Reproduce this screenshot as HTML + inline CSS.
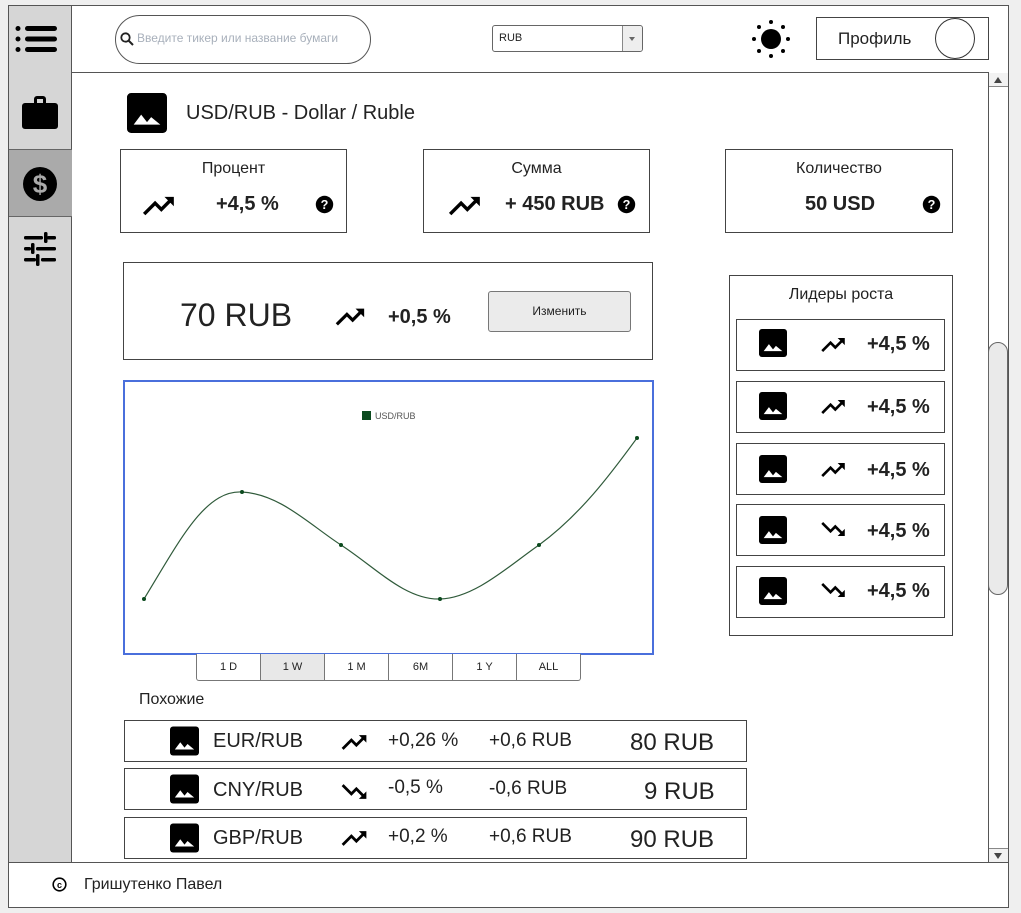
<!DOCTYPE html>
<html><head><meta charset="utf-8"><style>
*{box-sizing:border-box;margin:0;padding:0}
body{width:1021px;height:913px;background:#efefef;font-family:"Liberation Sans",Arial,sans-serif;color:#222;position:relative;overflow:hidden}
.a{position:absolute}
.box{position:absolute;border:1px solid #444;background:#fff}
.c{text-align:center}
svg{display:block}
.b{font-weight:bold}
</style></head><body>
<svg width="0" height="0" style="position:absolute"><defs>
<symbol id="up" viewBox="1 4 22 16"><path d="M2.5 17.5l7-7 4 4 6.3-6.3" fill="none" stroke="#000" stroke-width="2.2"/><path d="M15.5 6.5h6v6z" fill="#000"/></symbol>
<symbol id="dn" viewBox="1 4 22 16"><path d="M2.5 6.5l7 7 4-4 6.3 6.3" fill="none" stroke="#000" stroke-width="2.2"/><path d="M15.5 17.5h6v-6z" fill="#000"/></symbol>
<symbol id="img" viewBox="0 0 24 24"><rect x="0" y="0" width="24" height="24" rx="2.5" fill="#000"/><path d="M4 19l4.5-6 3.5 4.5 2.5-3 5.5 4.5z" fill="#fff"/></symbol>
<symbol id="q" viewBox="0 0 24 24"><circle cx="12" cy="12" r="11" fill="#000"/><text x="12" y="17.5" text-anchor="middle" font-family="Liberation Sans" font-weight="bold" font-size="16" fill="#fff">?</text></symbol>
</defs></svg>

<!-- frame -->
<div class="box" style="left:8px;top:5px;width:1001px;height:903px;border-color:#555"></div>
<div class="a" style="left:9px;top:6px;width:63px;height:856px;background:#d6d6d6;border-right:1px solid #555"></div>
<div class="a" style="left:9px;top:149px;width:63px;height:68px;background:#aaa;border-top:1px solid #666;border-bottom:1px solid #666"></div>
<svg class="a" style="left:14px;top:25px" width="44" height="28" viewBox="0 0 44 28"><circle cx="4" cy="3.5" r="2.5"/><circle cx="4" cy="14" r="2.5"/><circle cx="4" cy="24.5" r="2.5"/><rect x="11" y="1" width="32" height="5" rx="2.5"/><rect x="11" y="11.5" width="32" height="5" rx="2.5"/><rect x="11" y="22" width="32" height="5" rx="2.5"/></svg>
<svg class="a" style="left:22px;top:95px" width="36" height="34" viewBox="0 0 36 34"><path d="M12 8V4a3 3 0 0 1 3-3h6a3 3 0 0 1 3 3v4h-3V4h-6v4z"/><rect x="0" y="8" width="36" height="26" rx="3"/></svg>
<svg class="a" style="left:22px;top:166px" width="36" height="36" viewBox="0 0 36 36"><circle cx="18" cy="18" r="17"/><text x="18" y="27" text-anchor="middle" font-family="Liberation Sans" font-weight="bold" font-size="26" fill="#aaa">$</text></svg>
<svg class="a" style="left:23px;top:232px" width="34" height="34" viewBox="0 0 34 34" fill="#000"><rect x="1" y="4" width="19" height="3.5" rx="1.5"/><rect x="21" y="0" width="3.5" height="11" rx="1.5"/><rect x="24" y="4" width="9" height="3.5" rx="1.5"/><rect x="1" y="15" width="7" height="3.5" rx="1.5"/><rect x="8" y="11" width="3.5" height="11" rx="1.5"/><rect x="13" y="15" width="20" height="3.5" rx="1.5"/><rect x="1" y="26" width="12" height="3.5" rx="1.5"/><rect x="13" y="22" width="3.5" height="12" rx="1.5"/><rect x="18" y="26" width="15" height="3.5" rx="1.5"/></svg>

<!-- header -->
<div class="a" style="left:72px;top:72px;width:936px;height:1px;background:#555"></div>
<div class="a" style="left:115px;top:15px;width:256px;height:49px;border:1px solid #555;border-radius:25px;background:#fff"></div>
<svg class="a" style="left:120px;top:32px" width="14" height="14" viewBox="0 0 14 14"><circle cx="5.5" cy="5.5" r="4.2" fill="none" stroke="#222" stroke-width="1.8"/><path d="M8.5 8.5l4.5 4.5" stroke="#222" stroke-width="2"/></svg>
<div class="a" style="left:137px;top:31px;font-size:12px;color:#a8b0bb">Введите тикер или название бумаги</div>
<div class="a" style="left:492px;top:25px;width:151px;height:27px;border:1px solid #666;border-radius:3px;background:#fff"></div>
<div class="a" style="left:499px;top:32px;font-size:11px">RUB</div>
<div class="a" style="left:622px;top:26px;width:20px;height:25px;border-left:1px solid #888;background:#eee;border-radius:0 3px 3px 0"></div>
<div class="a" style="left:629px;top:37px;width:0;height:0;border-left:3px solid transparent;border-right:3px solid transparent;border-top:4px solid #666"></div>
<svg class="a" style="left:751px;top:19px" width="40" height="40" viewBox="0 0 40 40"><circle cx="20" cy="20" r="10"/><circle cx="20" cy="3" r="2"/><circle cx="20" cy="37" r="2"/><circle cx="3" cy="20" r="2"/><circle cx="37" cy="20" r="2"/><circle cx="8" cy="8" r="2"/><circle cx="32" cy="8" r="2"/><circle cx="8" cy="32" r="2"/><circle cx="32" cy="32" r="2"/></svg>
<div class="box" style="left:816px;top:17px;width:173px;height:43px"></div>
<div class="a" style="left:838px;top:29px;font-size:17px">Профиль</div>
<div class="a" style="left:935px;top:18px;width:40px;height:41px;border:1px solid #333;border-radius:50%;background:#fff"></div>

<!-- scrollbar -->
<div class="a" style="left:988px;top:72px;width:20px;height:790px;background:#fff;border-left:1px solid #555"></div>
<div class="a" style="left:989px;top:73px;width:19px;height:14px;border-bottom:1px solid #888;background:#f2f2f2"></div>
<div class="a" style="left:994px;top:77px;border-left:4px solid transparent;border-right:4px solid transparent;border-bottom:6px solid #444"></div>
<div class="a" style="left:989px;top:848px;width:19px;height:14px;border-top:1px solid #888;background:#f2f2f2"></div>
<div class="a" style="left:994px;top:853px;border-left:4px solid transparent;border-right:4px solid transparent;border-top:6px solid #444"></div>
<div class="a" style="left:988px;top:342px;width:20px;height:253px;border:1px solid #666;border-radius:10px;background:#eaeaea"></div>

<!-- footer -->
<div class="a" style="left:9px;top:862px;width:999px;height:45px;background:#fff;border-top:1px solid #555"></div>
<svg class="a" style="left:52px;top:877px" width="15" height="15" viewBox="0 0 15 15"><circle cx="7.5" cy="7.5" r="6.3" fill="none" stroke="#000" stroke-width="1.6"/><text x="7.5" y="11" text-anchor="middle" font-family="Liberation Sans" font-weight="bold" font-size="9">c</text></svg>
<div class="a" style="left:84px;top:876px;font-size:16px">Гришутенко Павел</div>

<!-- title -->
<svg class="a" style="left:127px;top:93px" width="40" height="40"><use href="#img"/></svg>
<div class="a" style="left:186px;top:102px;font-size:20px">USD/RUB - Dollar / Ruble</div>

<!-- stat cards -->
<div class="box" style="left:120px;top:149px;width:227px;height:84px"></div>
<div class="a c" style="left:120px;top:160px;width:227px;font-size:16px">Процент</div>
<svg class="a" style="left:141px;top:193px" width="36" height="25"><use href="#up"/></svg>
<div class="a b" style="left:216px;top:193px;font-size:20px">+4,5 %</div>
<svg class="a" style="left:315px;top:195px" width="19" height="19"><use href="#q"/></svg>

<div class="box" style="left:423px;top:149px;width:227px;height:84px"></div>
<div class="a c" style="left:423px;top:160px;width:227px;font-size:16px">Сумма</div>
<svg class="a" style="left:447px;top:193px" width="36" height="25"><use href="#up"/></svg>
<div class="a b" style="left:505px;top:193px;font-size:20px">+ 450 RUB</div>
<svg class="a" style="left:617px;top:195px" width="19" height="19"><use href="#q"/></svg>

<div class="box" style="left:725px;top:149px;width:228px;height:84px"></div>
<div class="a c" style="left:725px;top:160px;width:228px;font-size:16px">Количество</div>
<div class="a b" style="left:805px;top:193px;font-size:20px">50 USD</div>
<svg class="a" style="left:922px;top:195px" width="19" height="19"><use href="#q"/></svg>

<!-- price -->
<div class="box" style="left:123px;top:262px;width:530px;height:98px"></div>
<div class="a" style="left:180px;top:297px;font-size:32px">70 RUB</div>
<svg class="a" style="left:334px;top:305px" width="33" height="23"><use href="#up"/></svg>
<div class="a b" style="left:388px;top:306px;font-size:20px">+0,5 %</div>
<div class="a c" style="left:488px;top:291px;width:143px;height:41px;border:1px solid #777;border-radius:3px;background:#ebebeb;font-size:12px;line-height:39px">Изменить</div>

<!-- chart -->
<div class="a" style="left:123px;top:380px;width:531px;height:275px;border:2px solid #4a6fdc;background:#fff"></div>
<div class="a" style="left:362px;top:411px;width:9px;height:9px;background:#0b4a1e"></div>
<div class="a" style="left:375px;top:411px;font-size:9px;color:#555">USD/RUB</div>
<svg class="a" style="left:0;top:0" width="700" height="700" viewBox="0 0 700 700">
<path d="M144 599 C180 540 205 490 242 492 C280 494 310 525 341 545 C375 567 405 600 440 599 C475 598 510 565 539 545 C580 515 610 475 637 438" fill="none" stroke="#2f5a3a" stroke-width="1.2"/>
<g fill="#0b4a1e"><circle cx="144" cy="599" r="2"/><circle cx="242" cy="492" r="2"/><circle cx="341" cy="545" r="2"/><circle cx="440" cy="599" r="2"/><circle cx="539" cy="545" r="2"/><circle cx="637" cy="438" r="2"/></g>
</svg>
<div class="a" style="left:196px;top:654px;width:385px;height:27px;border:1px solid #777;border-top:none;border-radius:0 0 3px 3px;background:#fff;display:flex;font-size:11px">
<div class="c" style="width:64px;line-height:26px;border-right:1px solid #777">1 D</div>
<div class="c" style="width:64px;line-height:26px;border-right:1px solid #777;background:#e8e8e8">1 W</div>
<div class="c" style="width:64px;line-height:26px;border-right:1px solid #777">1 M</div>
<div class="c" style="width:64px;line-height:26px;border-right:1px solid #777">6M</div>
<div class="c" style="width:64px;line-height:26px;border-right:1px solid #777">1 Y</div>
<div class="c" style="width:63px;line-height:26px">ALL</div>
</div>

<!-- leaders -->
<div class="box" style="left:729px;top:275px;width:224px;height:361px"></div>
<div class="a c" style="left:729px;top:286px;width:224px;font-size:16px">Лидеры роста</div>
<div class="box" style="left:736px;top:319px;width:209px;height:52px"></div>
<svg class="a" style="left:759px;top:329px" width="28" height="28"><use href="#img"/></svg>
<svg class="a" style="left:819px;top:335px" width="29" height="19"><use href="#up"/></svg>
<div class="a b" style="left:867px;top:333px;font-size:20px">+4,5 %</div>
<div class="box" style="left:736px;top:381px;width:209px;height:52px"></div>
<svg class="a" style="left:759px;top:392px" width="28" height="28"><use href="#img"/></svg>
<svg class="a" style="left:819px;top:397px" width="29" height="19"><use href="#up"/></svg>
<div class="a b" style="left:867px;top:396px;font-size:20px">+4,5 %</div>
<div class="box" style="left:736px;top:443px;width:209px;height:52px"></div>
<svg class="a" style="left:759px;top:455px" width="28" height="28"><use href="#img"/></svg>
<svg class="a" style="left:819px;top:460px" width="29" height="19"><use href="#up"/></svg>
<div class="a b" style="left:867px;top:459px;font-size:20px">+4,5 %</div>
<div class="box" style="left:736px;top:504px;width:209px;height:52px"></div>
<svg class="a" style="left:759px;top:516px" width="28" height="28"><use href="#img"/></svg>
<svg class="a" style="left:819px;top:520px" width="29" height="19"><use href="#dn"/></svg>
<div class="a b" style="left:867px;top:520px;font-size:20px">+4,5 %</div>
<div class="box" style="left:736px;top:566px;width:209px;height:52px"></div>
<svg class="a" style="left:759px;top:577px" width="28" height="28"><use href="#img"/></svg>
<svg class="a" style="left:819px;top:581px" width="29" height="19"><use href="#dn"/></svg>
<div class="a b" style="left:867px;top:580px;font-size:20px">+4,5 %</div>

<!-- similar -->
<div class="a" style="left:139px;top:691px;font-size:16px">Похожие</div>

<div class="box" style="left:124px;top:720px;width:623px;height:42px"></div>
<svg class="a" style="left:170px;top:725px" width="29" height="32"><use href="#img"/></svg>
<div class="a" style="left:213px;top:730px;font-size:20px">EUR/RUB</div>
<svg class="a" style="left:340px;top:732px" width="29" height="20"><use href="#up"/></svg>
<div class="a" style="left:388px;top:730px;font-size:19px">+0,26 %</div>
<div class="a" style="left:489px;top:730px;font-size:19px">+0,6 RUB</div>
<div class="a" style="left:630px;top:729px;font-size:24px">80 RUB</div>

<div class="box" style="left:124px;top:768px;width:623px;height:42px"></div>
<svg class="a" style="left:170px;top:773px" width="29" height="32"><use href="#img"/></svg>
<div class="a" style="left:213px;top:779px;font-size:20px">CNY/RUB</div>
<svg class="a" style="left:340px;top:782px" width="29" height="20"><use href="#dn"/></svg>
<div class="a" style="left:388px;top:777px;font-size:19px">-0,5 %</div>
<div class="a" style="left:489px;top:778px;font-size:19px">-0,6 RUB</div>
<div class="a" style="left:644px;top:778px;font-size:24px">9 RUB</div>

<div class="box" style="left:124px;top:817px;width:623px;height:42px"></div>
<svg class="a" style="left:170px;top:822px" width="29" height="32"><use href="#img"/></svg>
<div class="a" style="left:213px;top:827px;font-size:20px">GBP/RUB</div>
<svg class="a" style="left:340px;top:828px" width="29" height="20"><use href="#up"/></svg>
<div class="a" style="left:388px;top:826px;font-size:19px">+0,2 %</div>
<div class="a" style="left:489px;top:826px;font-size:19px">+0,6 RUB</div>
<div class="a" style="left:630px;top:826px;font-size:24px">90 RUB</div>
</body></html>
